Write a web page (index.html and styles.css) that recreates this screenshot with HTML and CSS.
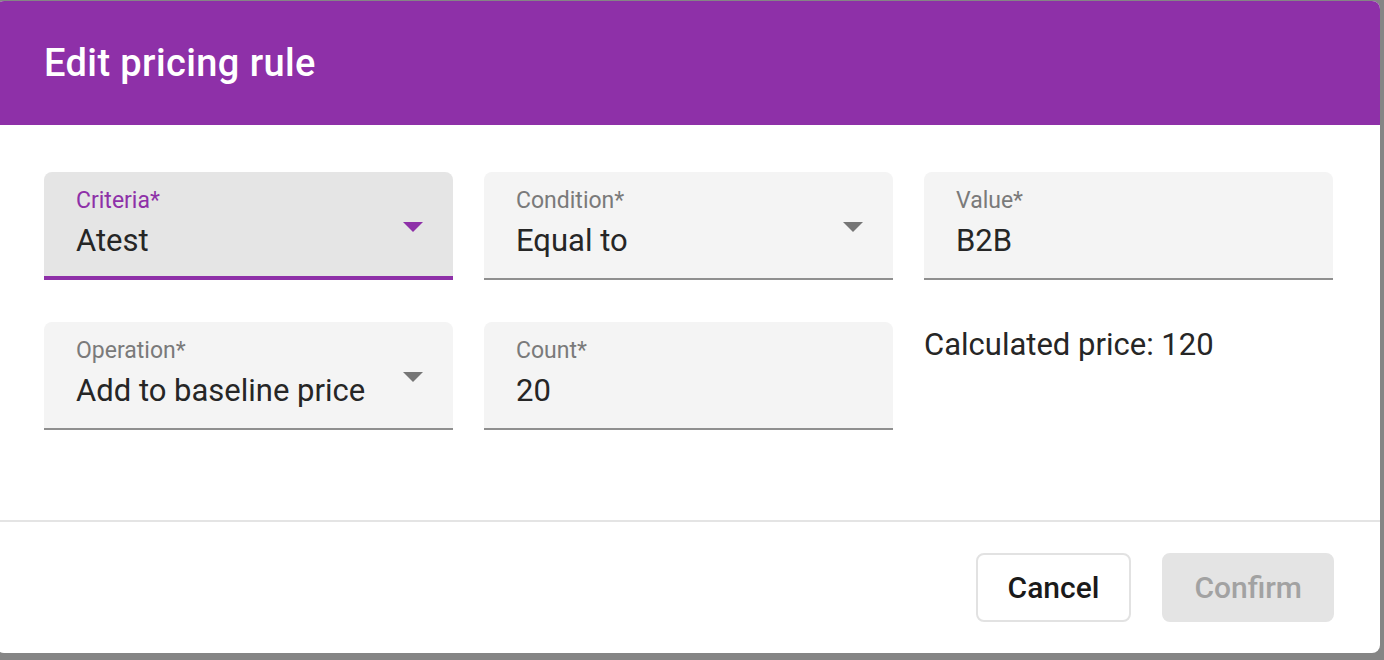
FILE: index.html
```html
<!DOCTYPE html>
<html lang="en">
<head>
<meta charset="utf-8">
<title>Edit pricing rule</title>
<link rel="stylesheet" href="styles.css">
</head>
<body>
<div class="dialog">
  <header class="dialog-header">
    <h1 class="dialog-title">Edit pricing rule</h1>
  </header>
  <main class="dialog-body">
    <div class="form-grid">
      <div class="field field-focused">
        <div class="field-text">
          <div class="field-label">Criteria*</div>
          <div class="field-value">Atest</div>
        </div>
        <svg class="field-arrow" width="20" height="10" viewBox="0 0 20 10"><path d="M0 0 L20 0 L10 10 Z"/></svg>
      </div>
      <div class="field">
        <div class="field-text">
          <div class="field-label">Condition*</div>
          <div class="field-value">Equal to</div>
        </div>
        <svg class="field-arrow" width="20" height="10" viewBox="0 0 20 10"><path d="M0 0 L20 0 L10 10 Z"/></svg>
      </div>
      <div class="field">
        <div class="field-text">
          <div class="field-label">Value*</div>
          <div class="field-value">B2B</div>
        </div>
      </div>
      <div class="field">
        <div class="field-text">
          <div class="field-label">Operation*</div>
          <div class="field-value">Add to baseline price</div>
        </div>
        <svg class="field-arrow" width="20" height="10" viewBox="0 0 20 10"><path d="M0 0 L20 0 L10 10 Z"/></svg>
      </div>
      <div class="field">
        <div class="field-text">
          <div class="field-label">Count*</div>
          <div class="field-value">20</div>
        </div>
      </div>
      <div class="calc">Calculated price: 120</div>
    </div>
  </main>
  <footer class="dialog-footer">
    <button class="btn btn-outline">Cancel</button>
    <button class="btn btn-disabled">Confirm</button>
  </footer>
</div>
</body>
</html>
```
FILE: styles.css
```css
html, body {
  margin: 0;
  padding: 0;
}
body {
  background: #858585;
  width: 1384px;
  height: 660px;
  overflow: hidden;
  font-family: Roboto, "Liberation Sans", Arial, sans-serif;
  padding-top: 1px;
  box-sizing: border-box;
}
.dialog {
  margin-left: -4px;
  width: 1384px;
  height: 652px;
  background: #ffffff;
  border-radius: 8px;
  overflow: hidden;
  display: flex;
  flex-direction: column;
}
.dialog-header {
  height: 124px;
  flex: none;
  background: #8e30a8;
  display: flex;
  align-items: center;
  padding-left: 48px;
}
.dialog-title {
  margin: 0;
  color: #ffffff;
  font-size: 38px;
  font-weight: 500;
  line-height: 44px;
  letter-spacing: 0.4px;
}
.dialog-body {
  flex: 1;
  padding: 47px 47px 0 48px;
  border-bottom: 2px solid #e4e4e4;
}
.form-grid {
  display: grid;
  grid-template-columns: repeat(3, 409px);
  column-gap: 31px;
  row-gap: 42px;
}
.field {
  height: 108px;
  box-sizing: border-box;
  background: #f4f4f4;
  border-radius: 8px 8px 0 0;
  border-bottom: 2px solid #8f8f8f;
  display: flex;
  align-items: flex-start;
  padding: 0 30px 0 32px;
}
.field-focused {
  background: #e5e5e5;
  border-bottom: 4px solid #8e30a8;
}
.field-text {
  flex: 1;
  padding-top: 15px;
}
.field-label {
  font-size: 23px;
  line-height: 28px;
  color: #7a7a7a;
}
.field-focused .field-label {
  color: #8e30a8;
}
.field-value {
  margin-top: 6px;
  font-size: 31px;
  line-height: 40px;
  color: #262626;
}
.field-arrow {
  margin-top: 50px;
  fill: #767676;
  flex: none;
}
.field-focused .field-arrow {
  fill: #8e30a8;
}
.calc {
  padding-top: 3px;
  font-size: 31px;
  line-height: 40px;
  color: #262626;
}
.dialog-footer {
  flex: none;
  height: 131px;
  box-sizing: border-box;
  display: flex;
  justify-content: flex-end;
  align-items: flex-start;
  gap: 31px;
  padding: 31px 46px 0 0;
}
.btn {
  height: 69px;
  box-sizing: border-box;
  padding: 0 30px;
  border-radius: 8px;
  font-family: Roboto, "Liberation Sans", Arial, sans-serif;
  font-size: 30px;
  font-weight: 500;
  line-height: 40px;
}
.btn-outline {
  background: #ffffff;
  border: 2px solid #e2e2e2;
  color: #1a1a1a;
}
.btn-disabled {
  background: #e4e4e4;
  border: 2px solid #e4e4e4;
  color: #a2a2a2;
}
```
